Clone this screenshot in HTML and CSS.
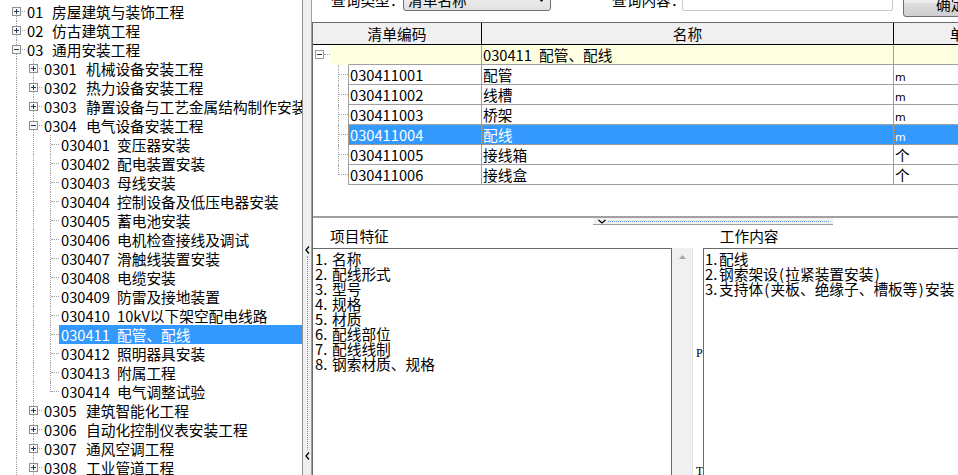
FILE: index.html
```html
<!DOCTYPE html>
<html>
<head>
<meta charset="utf-8">
<link rel="stylesheet" href="styles.css">
</head>
<body>
<div class="app">
  <div class="tree">
    <div class="tr"><i class="o first"><svg width="9" height="9" viewBox="0 0 9 9"><rect x="0.5" y="0.5" width="8" height="8" fill="#f7f7f7" stroke="#8e8f8f"/><path d="M2 4.5h5M4.5 2v5" stroke="#2a3a5a"/></svg></i><span class="lbl"><b class="c2">01</b>房屋建筑与装饰工程</span></div>
    <div class="tr"><i class="o"><svg width="9" height="9" viewBox="0 0 9 9"><rect x="0.5" y="0.5" width="8" height="8" fill="#f7f7f7" stroke="#8e8f8f"/><path d="M2 4.5h5M4.5 2v5" stroke="#2a3a5a"/></svg></i><span class="lbl"><b class="c2">02</b>仿古建筑工程</span></div>
    <div class="tr"><i class="o"><svg width="9" height="9" viewBox="0 0 9 9"><rect x="0.5" y="0.5" width="8" height="8" fill="#f7f7f7" stroke="#8e8f8f"/><path d="M2 4.5h5" stroke="#2a3a5a"/></svg></i><span class="lbl"><b class="c2">03</b>通用安装工程</span></div>
    <div class="tr"><i class="g v"></i><i class="o"><svg width="9" height="9" viewBox="0 0 9 9"><rect x="0.5" y="0.5" width="8" height="8" fill="#f7f7f7" stroke="#8e8f8f"/><path d="M2 4.5h5M4.5 2v5" stroke="#2a3a5a"/></svg></i><span class="lbl"><b class="c4">0301</b>机械设备安装工程</span></div>
    <div class="tr"><i class="g v"></i><i class="o"><svg width="9" height="9" viewBox="0 0 9 9"><rect x="0.5" y="0.5" width="8" height="8" fill="#f7f7f7" stroke="#8e8f8f"/><path d="M2 4.5h5M4.5 2v5" stroke="#2a3a5a"/></svg></i><span class="lbl"><b class="c4">0302</b>热力设备安装工程</span></div>
    <div class="tr"><i class="g v"></i><i class="o"><svg width="9" height="9" viewBox="0 0 9 9"><rect x="0.5" y="0.5" width="8" height="8" fill="#f7f7f7" stroke="#8e8f8f"/><path d="M2 4.5h5M4.5 2v5" stroke="#2a3a5a"/></svg></i><span class="lbl"><b class="c4">0303</b>静置设备与工艺金属结构制作安装工程</span></div>
    <div class="tr"><i class="g v"></i><i class="o"><svg width="9" height="9" viewBox="0 0 9 9"><rect x="0.5" y="0.5" width="8" height="8" fill="#f7f7f7" stroke="#8e8f8f"/><path d="M2 4.5h5" stroke="#2a3a5a"/></svg></i><span class="lbl"><b class="c4">0304</b>电气设备安装工程</span></div>
    <div class="tr"><i class="g v"></i><i class="g v"></i><i class="o"></i><span class="lbl"><b class="c6">030401</b>变压器安装</span></div>
    <div class="tr"><i class="g v"></i><i class="g v"></i><i class="o"></i><span class="lbl"><b class="c6">030402</b>配电装置安装</span></div>
    <div class="tr"><i class="g v"></i><i class="g v"></i><i class="o"></i><span class="lbl"><b class="c6">030403</b>母线安装</span></div>
    <div class="tr"><i class="g v"></i><i class="g v"></i><i class="o"></i><span class="lbl"><b class="c6">030404</b>控制设备及低压电器安装</span></div>
    <div class="tr"><i class="g v"></i><i class="g v"></i><i class="o"></i><span class="lbl"><b class="c6">030405</b>蓄电池安装</span></div>
    <div class="tr"><i class="g v"></i><i class="g v"></i><i class="o"></i><span class="lbl"><b class="c6">030406</b>电机检查接线及调试</span></div>
    <div class="tr"><i class="g v"></i><i class="g v"></i><i class="o"></i><span class="lbl"><b class="c6">030407</b>滑触线装置安装</span></div>
    <div class="tr"><i class="g v"></i><i class="g v"></i><i class="o"></i><span class="lbl"><b class="c6">030408</b>电缆安装</span></div>
    <div class="tr"><i class="g v"></i><i class="g v"></i><i class="o"></i><span class="lbl"><b class="c6">030409</b>防雷及接地装置</span></div>
    <div class="tr"><i class="g v"></i><i class="g v"></i><i class="o"></i><span class="lbl"><b class="c6">030410</b>10kV以下架空配电线路</span></div>
    <div class="tr"><i class="g v"></i><i class="g v"></i><i class="o"></i><span class="lbl sel"><b class="c6">030411</b>配管、配线</span></div>
    <div class="tr"><i class="g v"></i><i class="g v"></i><i class="o"></i><span class="lbl"><b class="c6">030412</b>照明器具安装</span></div>
    <div class="tr"><i class="g v"></i><i class="g v"></i><i class="o"></i><span class="lbl"><b class="c6">030413</b>附属工程</span></div>
    <div class="tr"><i class="g v"></i><i class="g v"></i><i class="o last"></i><span class="lbl"><b class="c6">030414</b>电气调整试验</span></div>
    <div class="tr"><i class="g v"></i><i class="o"><svg width="9" height="9" viewBox="0 0 9 9"><rect x="0.5" y="0.5" width="8" height="8" fill="#f7f7f7" stroke="#8e8f8f"/><path d="M2 4.5h5M4.5 2v5" stroke="#2a3a5a"/></svg></i><span class="lbl"><b class="c4">0305</b>建筑智能化工程</span></div>
    <div class="tr"><i class="g v"></i><i class="o"><svg width="9" height="9" viewBox="0 0 9 9"><rect x="0.5" y="0.5" width="8" height="8" fill="#f7f7f7" stroke="#8e8f8f"/><path d="M2 4.5h5M4.5 2v5" stroke="#2a3a5a"/></svg></i><span class="lbl"><b class="c4">0306</b>自动化控制仪表安装工程</span></div>
    <div class="tr"><i class="g v"></i><i class="o"><svg width="9" height="9" viewBox="0 0 9 9"><rect x="0.5" y="0.5" width="8" height="8" fill="#f7f7f7" stroke="#8e8f8f"/><path d="M2 4.5h5M4.5 2v5" stroke="#2a3a5a"/></svg></i><span class="lbl"><b class="c4">0307</b>通风空调工程</span></div>
    <div class="tr"><i class="g v"></i><i class="o"><svg width="9" height="9" viewBox="0 0 9 9"><rect x="0.5" y="0.5" width="8" height="8" fill="#f7f7f7" stroke="#8e8f8f"/><path d="M2 4.5h5M4.5 2v5" stroke="#2a3a5a"/></svg></i><span class="lbl"><b class="c4">0308</b>工业管道工程</span></div>
  </div>

  <div class="vsplit">
    <div class="vgrip">
      <svg class="chev" width="5" height="8" viewBox="0 0 5 8"><path d="M4 0.5L1 4L4 7.5" fill="none" stroke="#000" stroke-width="1.3"/></svg>
      <span class="vdots"></span>
      <svg class="chev" width="5" height="8" viewBox="0 0 5 8"><path d="M4 0.5L1 4L4 7.5" fill="none" stroke="#000" stroke-width="1.3"/></svg>
    </div>
  </div>

  <div class="main">
    <div class="toolbar">
      <div class="tb-inner">
        <span class="tb-label l1">查询类型：</span>
        <div class="combo"><span class="combo-text">清单名称</span><svg class="combo-arrow" width="7" height="4" viewBox="0 0 7 4"><path d="M0 0h7L3.5 4z" fill="#000"/></svg></div>
        <span class="tb-label l2">查询内容：</span>
        <div class="input"></div>
        <div class="btn">确定</div>
      </div>
    </div>

    <div class="work">
      <div class="table">
        <div class="thead">
          <div class="th th-code">清单编码</div>
          <div class="th th-name">名称</div>
          <div class="th th-unit">单位</div>
        </div>
        <div class="trow group">
          <div class="gut gut-g"><svg width="9" height="9" viewBox="0 0 9 9"><rect x="0.5" y="0.5" width="8" height="8" fill="#fff" stroke="#9a9a9a"/><path d="M2 4.5h5" stroke="#333"/></svg></div>
          <div class="gpad"></div>
          <div class="td code gcode"></div>
          <div class="td name"><span class="c6">030411</span>配管、配线</div>
          <div class="td unit"></div>
        </div>
        <div class="trow">
          <div class="gut tee"></div>
          <div class="td code">030411001</div>
          <div class="td name">配管</div>
          <div class="td unit"><span class="u">m</span></div>
        </div>
        <div class="trow">
          <div class="gut tee"></div>
          <div class="td code">030411002</div>
          <div class="td name">线槽</div>
          <div class="td unit"><span class="u">m</span></div>
        </div>
        <div class="trow">
          <div class="gut tee"></div>
          <div class="td code">030411003</div>
          <div class="td name">桥架</div>
          <div class="td unit"><span class="u">m</span></div>
        </div>
        <div class="trow selrow">
          <div class="gut tee"></div>
          <div class="td code">030411004</div>
          <div class="td name">配线</div>
          <div class="td unit"><span class="u">m</span></div>
        </div>
        <div class="trow">
          <div class="gut tee"></div>
          <div class="td code">030411005</div>
          <div class="td name">接线箱</div>
          <div class="td unit">个</div>
        </div>
        <div class="trow">
          <div class="gut tee lastg"></div>
          <div class="td code">030411006</div>
          <div class="td name">接线盒</div>
          <div class="td unit">个</div>
        </div>
      </div>

      <div class="hsplit">
        <div class="hgrip">
          <svg class="hchev" width="8" height="5" viewBox="0 0 8 5"><path d="M0.5 1L4 4L7.5 1" fill="none" stroke="#000" stroke-width="1.3"/></svg>
          <span class="hdots"></span>
        </div>
      </div>

      <div class="detail">
        <div class="labels">
          <span class="lab lab1">项目特征</span>
          <span class="lab lab2">工作内容</span>
        </div>
        <div class="boxes">
          <div class="box left">
            <div class="ln"><span class="n">1.</span>名称</div>
            <div class="ln"><span class="n">2.</span>配线形式</div>
            <div class="ln"><span class="n">3.</span>型号</div>
            <div class="ln"><span class="n">4.</span>规格</div>
            <div class="ln"><span class="n">5.</span>材质</div>
            <div class="ln"><span class="n">6.</span>配线部位</div>
            <div class="ln"><span class="n">7.</span>配线线制</div>
            <div class="ln"><span class="n">8.</span>钢索材质、规格</div>
          </div>
          <div class="sbar"><svg class="up" width="7" height="4" viewBox="0 0 7 4"><path d="M0 4h7L3.5 0z" fill="#a8a8a8"/></svg></div>
          <div class="gapw"><div class="stray s1">P</div><div class="stray s2">T</div></div>
          <div class="box right">
            <div class="ln"><span class="n n2">1.</span>配线</div>
            <div class="ln"><span class="n n2">2.</span>钢索架设<span class="p">(</span>拉紧装置安装<span class="p">)</span></div>
            <div class="ln"><span class="n n2">3.</span>支持体<span class="p">(</span>夹板、绝缘子、槽板等<span class="p">)</span>安装</div>
          </div>
        </div>
      </div>
    </div>
  </div>
</div>
</body>
</html>
```

FILE: styles.css
```css
* { box-sizing: border-box; }
html, body { margin: 0; padding: 0; }
body {
  width: 958px;
  height: 475px;
  overflow: hidden;
  background: #fff;
  color: #000;
  font-family: "Noto Sans CJK SC", "Noto Sans", sans-serif;
  font-size: 14.7px;
}
b { font-weight: normal; }
.app { display: flex; height: 475px; }

/* ---------- tree ---------- */
.tree {
  width: 303px;
  flex-shrink: 0;
  border-right: 1px solid #8f8f8f;
  padding: 2px 0 0 8px;
  overflow: hidden;
}
.tr { display: flex; height: 19px; line-height: 19px; white-space: nowrap; }
.g, .o { display: block; width: 17px; height: 19px; flex-shrink: 0; position: relative; }
.g.v::before, .o::before {
  content: ""; position: absolute; left: 8px; top: 0; bottom: 0;
  border-left: 1px dotted #a0a0a0;
}
.o::after {
  content: ""; position: absolute; left: 9px; right: 0; top: 9px;
  border-top: 1px dotted #a0a0a0;
}
.o.first::before { top: 9px; }
.o.last::before { bottom: 9px; }
.o svg { position: absolute; left: 4px; top: 5px; z-index: 1; }
.lbl { padding-left: 2px; flex: 1; }
.lbl.sel { background: #3399ff; color: #fff; }
.c2, .c4, .c6 { display: inline-block; }
.c2 { width: 25px; }
.c4 { width: 42px; }
.c6 { width: 56px; }

/* ---------- vertical splitter ---------- */
.vsplit { width: 8px; flex-shrink: 0; background: #f0f0f0; display: flex; flex-direction: column; }
.vgrip { margin-top: 246px; height: 214px; display: flex; flex-direction: column; align-items: center; }
.chev { display: block; flex-shrink: 0; }
.vdots { flex: 1; width: 0; border-left: 1px dotted #5b9be6; margin: 2px 0; }

/* ---------- main ---------- */
.main {
  flex: 1; min-width: 0;
  display: flex; flex-direction: column;
  border-left: 1px solid #a0a0a0;
  overflow: hidden;
}
.toolbar { height: 22px; flex-shrink: 0; overflow: hidden; }
.tb-inner { display: flex; align-items: flex-start; margin-top: -12px; white-space: nowrap; }
.tb-label { flex-shrink: 0; height: 24px; line-height: 24px; }
.l1 { margin-left: 19px; width: 72px; }
.combo {
  flex-shrink: 0; width: 148px; height: 23px;
  border: 1px solid #707070; border-radius: 3px;
  background: linear-gradient(#f2f2f2, #e2e2e2);
  display: flex; align-items: center; padding: 0 5px 0 4px;
}
.combo-text { flex: 1; line-height: 21px; }
.combo-arrow { display: block; }
.l2 { margin-left: 61px; width: 70px; }
.input {
  flex-shrink: 0; width: 211px; height: 23px;
  border: 1px solid #c5c9d0; border-radius: 2px; background: #fff;
}
.btn {
  flex-shrink: 0; margin-left: 10px; width: 90px; height: 29px;
  border: 1px solid #707070; border-radius: 3px;
  background: linear-gradient(#f2f2f2 0%, #ebebeb 50%, #dddddd 51%, #cfcfcf 100%);
  line-height: 30px; padding-top: 0; padding-left: 32px;
}

.work { flex: 1; display: flex; flex-direction: column; border-left: 1px solid #6a6a6a; min-height: 0; }

/* ---------- table ---------- */
.table {
  height: 196px; flex-shrink: 0;
  border-top: 1px solid #6a6a6a;
  border-bottom: 2px solid #a0a0a0;
  overflow: hidden;
}
.thead { display: flex; height: 22px; background: #f0f0f0; border-bottom: 1px solid #000; }
.th { flex-shrink: 0; text-align: center; line-height: 21px; border-right: 1px solid #000; }
.th-code { width: 169px; }
.th-name { width: 412px; }
.th-unit { width: 142px; }

.trow { display: flex; height: 20px; line-height: 19px; white-space: nowrap; }
.gut { width: 35px; flex-shrink: 0; position: relative; }
.gut.tee::before {
  content: ""; position: absolute; left: 25px; top: 0; bottom: 0;
  border-left: 1px dotted #a0a0a0;
}
.gut.tee::after {
  content: ""; position: absolute; left: 26px; right: 0; top: 9px;
  border-top: 1px dotted #a0a0a0;
}
.gut.lastg::before { bottom: 10px; }
.gut-g { width: 17px; }
.gut-g::after {
  content: ""; position: absolute; left: 11px; right: 0; top: 9px;
  border-top: 1px dotted #a0a0a0;
}
.gut-g svg { position: absolute; left: 2px; top: 5px; z-index: 1; }
.gpad { width: 18px; flex-shrink: 0; background: #ffffe1; }

.td {
  flex-shrink: 0; height: 20px;
  border-right: 1px solid #a0a0a0;
  border-bottom: 1px solid #a0a0a0;
  padding-left: 1px;
}
.td.code { width: 134px; border-left: 1px solid #a0a0a0; }
.td.name { width: 412px; }
.td.unit { width: 142px; }
.group .td { background: #ffffe1; }
.group .td.gcode { border-left-color: #ffffe1; }
.u { font-family: "DejaVu Sans", sans-serif; font-size: 11px; }

.selrow .td {
  background: #3399ff; color: #fff;
  outline: 1px dotted #c8874a; outline-offset: -1px;
}

/* ---------- horizontal splitter ---------- */
.hsplit { height: 7px; flex-shrink: 0; }
.hgrip {
  margin-left: 280px; width: 240px; height: 7px;
  background: #f0f0f0; border-bottom: 1px solid #a0a0a0;
  display: flex; align-items: center; padding-left: 5px;
}
.hchev { display: block; flex-shrink: 0; }
.hdots { flex: 1; height: 0; border-top: 1px dotted #5b9be6; margin: 0 4px 0 2px; }

/* ---------- detail ---------- */
.detail { flex: 1; display: flex; flex-direction: column; min-height: 0; }
.labels { height: 23px; flex-shrink: 0; display: flex; padding-top: 2px; line-height: 18px; white-space: nowrap; }
.lab1 { margin-left: 17px; }
.lab2 { margin-left: 331px; }
.boxes { flex: 1; display: flex; min-height: 0; }
.box { border-top: 1px solid #6a6a6a; padding-top: 2px; line-height: 15px; white-space: nowrap; overflow: hidden; }
.box.left { width: 359px; flex-shrink: 0; border-right: 1px solid #6a6a6a; padding-left: 2px; }
.sbar { width: 21px; flex-shrink: 0; background: #f0f0f0; border-right: 1px solid #e2e2e2; padding: 7px 0 0 7px; }
.up { display: block; }
.gapw { width: 10px; flex-shrink: 0; overflow: hidden; padding-left: 3px; }
.stray { font-family: "Liberation Serif", serif; font-size: 12px; line-height: 12px; height: 12px; }
.s1 { margin-top: 99px; }
.s2 { margin-top: 106px; }
.box.right { flex: 1; min-width: 0; border-left: 1px solid #6a6a6a; padding-left: 1px; }
.ln { height: 15px; }
.n { display: inline-block; width: 17px; }
.n2 { width: 14px; }
.p { display: inline-block; width: 7.5px; text-align: center; }
```
